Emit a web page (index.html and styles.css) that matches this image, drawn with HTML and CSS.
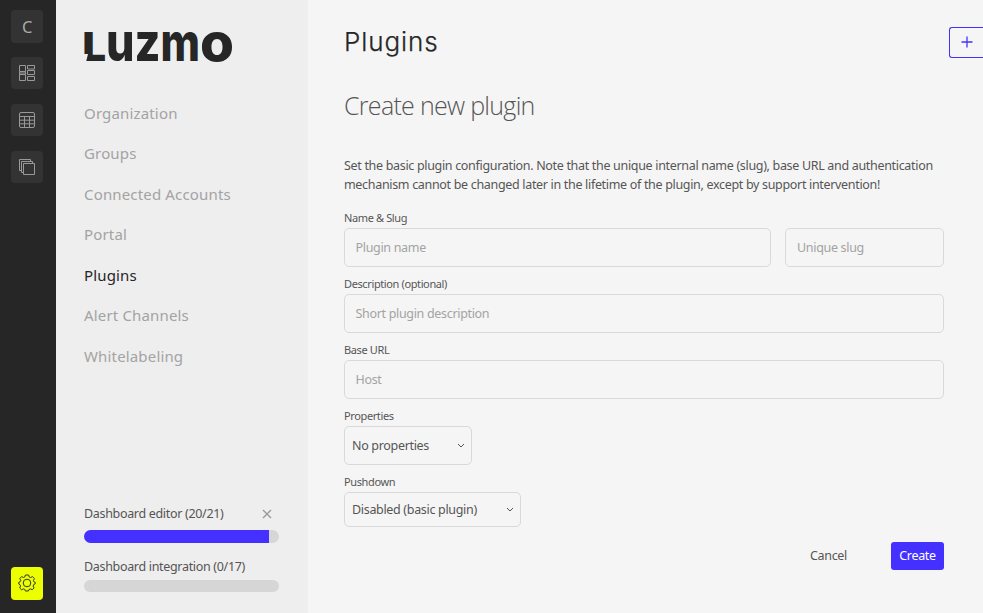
FILE: index.html
```html
<!DOCTYPE html>
<html lang="en">
<head>
    <meta charset="UTF-8">
    <title>Plugins</title>
    <link rel="stylesheet" href="styles.css">
</head>
<body>
<div class="app">
    <div class="rail">
        <a class="rail-item letter">C</a>
        <a class="rail-item">
            <svg width="16" height="16" viewBox="0 0 16 16">
                <path d="M.5.5h6v6h-6zM.5 9.5h6v6h-6zM8.500.5h7v3.500h-7zM8.500 5.500h7v4h-7zM8.500 11.500h7v4h-7zM.5 6.500v3M6.500 6.500v3M1 8h5"/>
            </svg>
        </a>
        <a class="rail-item">
            <svg width="16" height="16" viewBox="0 0 16 16">
                <rect x=".5" y=".5" width="15" height="15" rx="1.500"/>
                <path d="M.5 4.500h15M.5 8.200h15M.5 11.800h15M5.500 4.500v11M10.500 4.500v11"/>
            </svg>
        </a>
        <a class="rail-item">
            <svg width="16" height="16" viewBox="0 0 16 16">
                <path d="M4.500 4.500h11v11h-11zM4.500 13.500h-2v-11h11v2M2.500 11.500h-2v-11h11v2"/>
            </svg>
        </a>
        <a class="rail-item settings">
            <svg width="18" height="18" viewBox="0 0 18 18">
                <circle cx="9" cy="9" r="3.800"/>
                <path d="M7.400 1h3.200l.6 2 1.300.6 2-1 1.900 2-1 1.900.5 1.300 1.300.5v1.600l-1.500.7-.6 1.400.9 1.900-1.700 1.800-2-.8-1.300.6-.6 1.500H7.400l-.6-1.600-1.400-.5-1.900.9L1.700 14l.8-2-.5-1.300L.8 10V8.300l1.400-.6.6-1.300-1-1.900 1.800-1.900 2 .9 1.200-.6z"/>
            </svg>
        </a>
    </div>

    <div class="sidebar">
        <svg class="logo" width="150" height="34" viewBox="0 0 150 34">
            <text y="31"><tspan class="logo-l" x="-1.500" textLength="23.500" lengthAdjust="spacingAndGlyphs">L</tspan><tspan x="22" textLength="28.500" lengthAdjust="spacingAndGlyphs">u</tspan><tspan x="50.500" textLength="26" lengthAdjust="spacingAndGlyphs">z</tspan><tspan x="76.500" textLength="39.500" lengthAdjust="spacingAndGlyphs">m</tspan><tspan x="116" textLength="34" lengthAdjust="spacingAndGlyphs">o</tspan></text>
            <path class="logo-cut" d="M-2 24h6l-2 8h-4z"/>
        </svg>
        <ul class="menu">
            <li>Organization</li>
            <li>Groups</li>
            <li>Connected Accounts</li>
            <li>Portal</li>
            <li class="active">Plugins</li>
            <li>Alert Channels</li>
            <li>Whitelabeling</li>
        </ul>
        <div class="progress">
            <div class="progress-title">
                <span>Dashboard editor (20/21)</span>
                <svg class="close" width="10" height="10" viewBox="0 0 10 10"><path d="M1 1l8 8M9 1l-8 8"/></svg>
            </div>
            <div class="bar"><div class="bar-fill" style="width: 95%"></div></div>
            <div class="progress-title"><span>Dashboard integration (0/17)</span></div>
            <div class="bar small"></div>
        </div>
    </div>

    <div class="content">
        <div class="header">
            <h1>Plugins</h1>
            <button class="add">
                <svg width="12" height="12" viewBox="0 0 12 12"><path d="M6 .5v11M.5 6h11"/></svg>
            </button>
        </div>
        <form>
            <h2>Create new plugin</h2>
            <p>Set the basic plugin configuration. Note that the unique internal name (slug), base URL and authentication<br>
                mechanism cannot be changed later in the lifetime of the plugin, except by support intervention!</p>

            <label>Name &amp; Slug</label>
            <div class="row">
                <input class="name" type="text" placeholder="Plugin name">
                <input class="slug" type="text" placeholder="Unique slug">
            </div>
            <label>Description (optional)</label>
            <div class="row"><input type="text" placeholder="Short plugin description"></div>
            <label>Base URL</label>
            <div class="row"><input type="text" placeholder="Host"></div>
            <label>Properties</label>
            <div class="row">
                <div class="select properties">
                    <select><option>No properties</option></select>
                    <svg width="8" height="6" viewBox="0 0 8 6"><path d="M1 1l3 3 3-3"/></svg>
                </div>
            </div>
            <label>Pushdown</label>
            <div class="row">
                <div class="select pushdown">
                    <select><option>Disabled (basic plugin)</option></select>
                    <svg width="8" height="6" viewBox="0 0 8 6"><path d="M1 1l3 3 3-3"/></svg>
                </div>
            </div>
            <div class="buttons">
                <button type="button" class="cancel">Cancel</button>
                <button type="button" class="create">Create</button>
            </div>
        </form>
    </div>
</div>
</body>
</html>
```
FILE: styles.css
```css
* {
    box-sizing: border-box;
}
body {
    margin: 0;
    font-family: "Noto Sans", "Open Sans", sans-serif;
    font-size: 12.5px;
    letter-spacing: -.32px;
    color: #555;
    background: #f5f5f5;
    overflow: hidden;
}
svg {
    fill: none;
    stroke: currentColor;
}
.app {
    display: flex;
    height: 613px;
}

/* dark icon rail */
.rail {
    width: 56px;
    flex: none;
    background: #262626;
    padding: 10px 0 13px 11px;
    display: flex;
    flex-direction: column;
    gap: 15px;
}
.rail-item {
    width: 32px;
    height: 32px;
    border-radius: 4px;
    background: #333;
    color: #999;
    display: flex;
    align-items: center;
    justify-content: center;
}
.letter {
    height: 33px;
    margin-bottom: -1px;
    font-size: 16.5px;
    color: #aaa;
}
.settings {
    height: 33px;
    margin-top: auto;
    padding-bottom: 1px;
    background: #ebff00;
    color: #333;
}

/* sidebar */
.sidebar {
    width: 252px;
    flex: none;
    background: #eee;
    padding: 30px 29px 21px 28px;
    display: flex;
    flex-direction: column;
}
.logo {
    display: block;
    overflow: visible;
}
.logo text {
    font-family: Inter, sans-serif;
    font-size: 53px;
    font-weight: 800;
    letter-spacing: 0;
    fill: #262626;
    stroke: none;
}
.logo .logo-l {
    font-size: 40px;
    font-weight: 900;
}
.logo-cut {
    fill: #eee;
    stroke: none;
}
.menu {
    list-style: none;
    margin: 29px 0 0;
    padding: 0;
    font-size: 15px;
    line-height: 40.45px;
    letter-spacing: .16px;
    color: #a3a3a3;
}
.menu .active {
    color: #262626;
}
.progress {
    margin-top: auto;
}
.progress-title {
    display: flex;
    justify-content: space-between;
    align-items: center;
    line-height: 20px;
    white-space: nowrap;
}
.close {
    color: #999;
    margin-right: 7px;
    stroke-width: 1.4;
}
.bar {
    height: 13px;
    margin: 6px 0 14px;
    border-radius: 7px;
    background: #d6d6d6;
    overflow: hidden;
}
.bar-fill {
    height: 100%;
    background: #4431ff;
}
.bar.small {
    height: 12px;
    margin: 3px 0 0;
}

/* content */
.content {
    flex: 1;
    min-width: 0;
    padding-left: 36px;
}
.header {
    display: flex;
    justify-content: space-between;
    padding-top: 27px;
}
h1 {
    margin: -1px 0 1px;
    font: 300 26px/31px Inter, sans-serif;
    letter-spacing: .9px;
    color: #262626;
    -webkit-text-stroke: .25px #262626;
}
.add {
    width: 34px;
    height: 31px;
    padding: 0 0 1px;
    border: 1px solid #4431ff;
    border-right: 0;
    border-radius: 3px 0 0 3px;
    background: none;
    color: #4431ff;
    display: flex;
    align-items: center;
    justify-content: center;
}
.add svg {
    stroke-width: 1.3;
}
form {
    width: 600px;
}
h2 {
    margin: 29px 0 33px;
    font: 300 25px/36px "Open Sans", sans-serif;
    letter-spacing: -.7px;
}
p {
    margin: 0 0 14px;
    line-height: 19px;
    white-space: nowrap;
}
label {
    display: block;
    font-size: 11px;
    line-height: 20px;
    letter-spacing: -.38px;
}
.row {
    display: flex;
    gap: 14px;
    margin-bottom: 7px;
}
input, select {
    width: 100%;
    height: 39px;
    padding: 0 10.5px;
    border: 1px solid #d9d9d9;
    border-radius: 5px;
    background: transparent;
    color: #555;
    font: inherit;
    letter-spacing: inherit;
}
input::placeholder {
    color: #a3a3a3;
}
.name {
    width: 427px;
}
.slug {
    width: 159px;
    padding-left: 11px;
}
.select {
    position: relative;
}
.select select {
    appearance: none;
    padding: 0 7px;
}
.select svg {
    position: absolute;
    right: 7px;
    top: 50%;
    margin-top: -3px;
}
.properties {
    width: 128px;
}
.pushdown {
    width: 177px;
}
.pushdown select {
    height: 35px;
}
.buttons {
    display: flex;
    justify-content: flex-end;
    gap: 36px;
    margin-top: 15px;
}
.buttons button {
    height: 28px;
    border: 0;
    border-radius: 3px;
    padding: 0 8px 1px;
    background: none;
    color: #555;
    font: inherit;
    letter-spacing: inherit;
}
.buttons .create {
    width: 53px;
    background: #4431ff;
    color: #fff;
}
```
